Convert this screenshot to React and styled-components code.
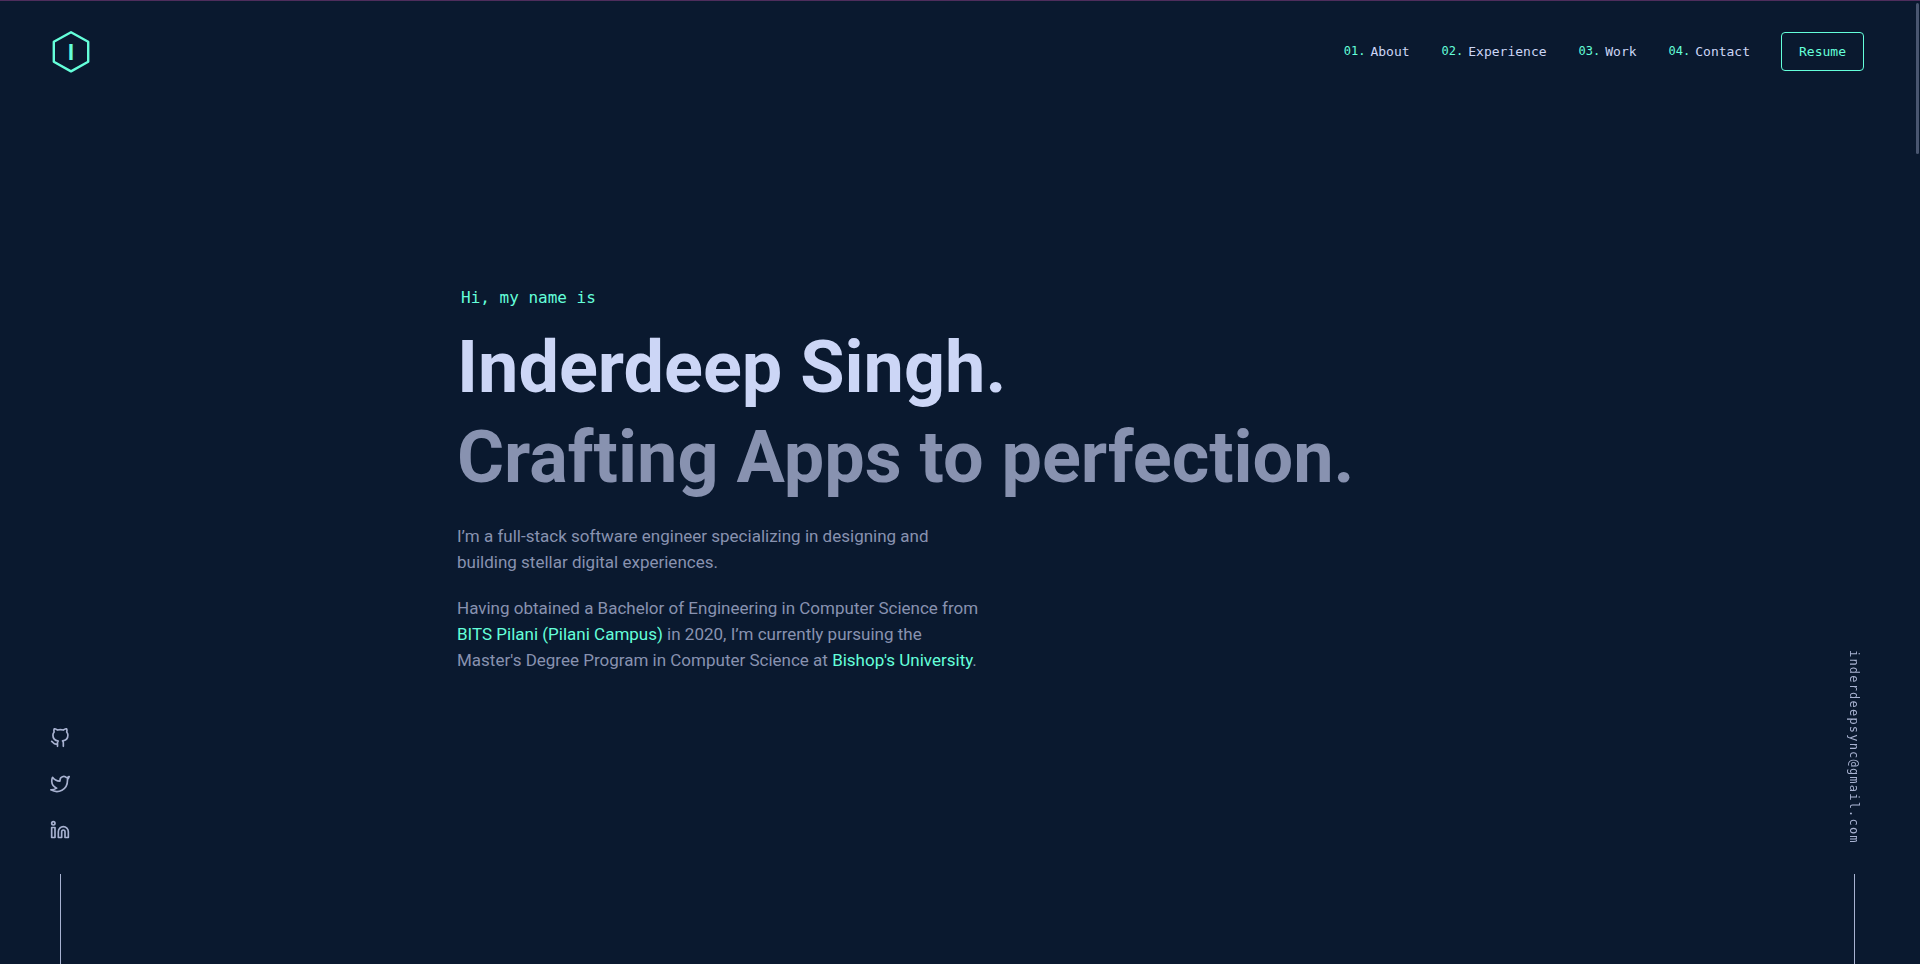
import React from "react";
import styled, { createGlobalStyle, css } from "styled-components";

const color = {
  navy: "#0a192f",
  green: "#64ffda",
  slate: "#8892b0",
  lightSlate: "#a8b2d1",
  lightestSlate: "#ccd6f6",
  thumb: "#495670",
  accent: "#4e2d5c",
};
const mono = css`
  font-family: "DejaVu Sans Mono", "Liberation Mono", monospace;
`;

const GlobalStyle = createGlobalStyle`
  *, *::before, *::after { box-sizing: border-box; }
  body {
    margin: 0;
    background: ${color.navy};
    color: ${color.slate};
    font-family: Roboto, "Liberation Sans", sans-serif;
    font-size: 17px;
    line-height: 26px;
  }
  a { color: inherit; text-decoration: none; }
`;

const Page = styled.div`
  min-height: 100vh;
  padding-right: 6px;
  border-top: 1px solid ${color.accent};
`;

const ScrollThumb = styled.div`
  position: fixed;
  top: 3px;
  right: 1px;
  width: 3px;
  height: 151px;
  border-radius: 2px;
  background: ${color.thumb};
`;

const Header = styled.header`
  display: flex;
  align-items: center;
  justify-content: space-between;
  height: 101px;
  padding: 0 50px;
`;

const LogoLink = styled.a`
  display: flex;
  color: ${color.green};
  svg { display: block; }
  text { font: 700 22px Roboto, sans-serif; }
`;

const Nav = styled.nav`
  display: flex;
  align-items: center;
  gap: 31px;
  ${mono}
  font-size: 13px;
  line-height: 15px;
`;

const NavList = styled.ol`
  display: flex;
  gap: 32px;
  margin: 0;
  padding: 0;
  list-style: none;
`;

const NavLink = styled.a`
  display: flex;
  align-items: center;
  gap: 5px;
  color: ${color.lightestSlate};
`;

const NavNumber = styled.span`
  color: ${color.green};
  font-size: 12px;
`;

const ResumeLink = styled.a`
  padding: 11px 17px;
  border: 1px solid ${color.green};
  border-radius: 4px;
  color: ${color.green};
`;

const Hero = styled.main`
  display: flex;
  flex-direction: column;
  justify-content: center;
  max-width: 1000px;
  min-height: calc(100vh - 102px);
  margin: 0 auto;
  padding-bottom: 106px;
`;

const Greeting = styled.p`
  margin: 0 0 15px 4px;
  ${mono}
  color: ${color.green};
  font-size: 16px;
  line-height: 20px;
`;

const Title = styled.h1`
  margin: 0;
  color: ${color.lightestSlate};
  font-size: 72px;
  font-weight: 700;
  line-height: 90px;
`;

const Tagline = styled(Title).attrs({ as: "h2" })`
  color: ${color.slate};
`;

const Paragraph = styled.p`
  max-width: 540px;
  margin: 20px 0 0;
`;

const InlineLink = styled.a`
  && { color: ${color.green}; }
`;

const Side = styled.aside`
  position: fixed;
  bottom: 0;
  ${(p) => (p.$side === "left" ? "left: 40px;" : "right: 46px;")}
  display: flex;
  flex-direction: column;
  align-items: center;
  width: 40px;
  color: ${color.lightSlate};
  &::after {
    content: "";
    width: 1px;
    height: 90px;
    background: ${color.lightSlate};
  }
`;

const SocialList = styled.ul`
  display: flex;
  flex-direction: column;
  gap: 26px;
  margin: 0 0 34px;
  padding: 0;
  list-style: none;
  svg { display: block; }
`;

const EmailLink = styled.a`
  margin-bottom: 30px;
  ${mono}
  font-size: 12px;
  line-height: 18px;
  letter-spacing: 0.1em;
  writing-mode: vertical-rl;
`;

const sections = ["About", "Experience", "Work", "Contact"];

const socials = [
  {
    name: "GitHub",
    href: "https://github.com",
    shape: (
      <path d="M9 19c-5 1.5-5-2.5-7-3m14 6v-3.87a3.37 3.37 0 0 0-.94-2.61c3.14-.35 6.44-1.54 6.44-7A5.44 5.44 0 0 0 20 4.77 5.07 5.07 0 0 0 19.91 1S18.73.65 16 2.48a13.38 13.38 0 0 0-7 0C6.27.65 5.09 1 5.09 1A5.07 5.07 0 0 0 5 4.77a5.44 5.44 0 0 0-1.5 3.78c0 5.42 3.3 6.61 6.44 7A3.37 3.37 0 0 0 9 18.13V22" />
    ),
  },
  {
    name: "Twitter",
    href: "https://twitter.com",
    shape: (
      <path d="M23 3a10.9 10.9 0 0 1-3.14 1.53 4.48 4.48 0 0 0-7.86 3v1A10.66 10.66 0 0 1 3 4s-4 9 5 13a11.64 11.64 0 0 1-7 2c9 5 20 0 20-11.5a4.5 4.5 0 0 0-.08-.83A7.72 7.72 0 0 0 23 3z" />
    ),
  },
  {
    name: "LinkedIn",
    href: "https://linkedin.com",
    shape: (
      <>
        <path d="M16 8a6 6 0 0 1 6 6v7h-4v-7a2 2 0 0 0-2-2 2 2 0 0 0-2 2v7h-4v-7a6 6 0 0 1 6-6z" />
        <rect x="2" y="9" width="4" height="12" />
        <circle cx="4" cy="4" r="2" />
      </>
    ),
  },
];

function Logo() {
  return (
    <svg width="42" height="48" viewBox="0 0 42 48" fill="none">
      <path
        d="M21 4.2 38.2 13.8v20L21 43.4 3.8 33.8v-20Z"
        stroke="currentColor"
        strokeWidth="2.4"
        strokeLinejoin="round"
      />
      <text x="21" y="32" textAnchor="middle" fill="currentColor">I</text>
    </svg>
  );
}

function SocialIcon({ children }) {
  return (
    <svg
      width="20"
      height="20"
      viewBox="0 0 24 24"
      fill="none"
      stroke="currentColor"
      strokeWidth="2"
      strokeLinecap="round"
      strokeLinejoin="round"
    >
      {children}
    </svg>
  );
}

export default function App() {
  return (
    <Page>
      <GlobalStyle />
      <Header>
        <LogoLink href="#home" aria-label="Home">
          <Logo />
        </LogoLink>
        <Nav>
          <NavList>
            {sections.map((name, i) => (
              <li key={name}>
                <NavLink href={`#${name.toLowerCase()}`}>
                  <NavNumber>{`0${i + 1}.`}</NavNumber>
                  {name}
                </NavLink>
              </li>
            ))}
          </NavList>
          <ResumeLink href="#resume">Resume</ResumeLink>
        </Nav>
      </Header>

      <Hero>
        <Greeting>Hi, my name is</Greeting>
        <Title>Inderdeep Singh.</Title>
        <Tagline>Crafting Apps to perfection.</Tagline>
        <Paragraph>
          I’m a full-stack software engineer specializing in designing and
          <br />
          building stellar digital experiences.
        </Paragraph>
        <Paragraph>
          Having obtained a Bachelor of Engineering in Computer Science from{" "}
          <InlineLink href="#bits">BITS Pilani (Pilani Campus)</InlineLink> in
          2020, I’m currently pursuing the
          <br />
          Master's Degree Program in Computer Science at{" "}
          <InlineLink href="#bishops">Bishop's University</InlineLink>.
        </Paragraph>
      </Hero>

      <Side $side="left">
        <SocialList>
          {socials.map((s) => (
            <li key={s.name}>
              <a href={s.href} aria-label={s.name}>
                <SocialIcon>{s.shape}</SocialIcon>
              </a>
            </li>
          ))}
        </SocialList>
      </Side>
      <Side $side="right">
        <EmailLink href="mailto:inderdeepsync@gmail.com">
          inderdeepsync@gmail.com
        </EmailLink>
      </Side>
      <ScrollThumb />
    </Page>
  );
}
